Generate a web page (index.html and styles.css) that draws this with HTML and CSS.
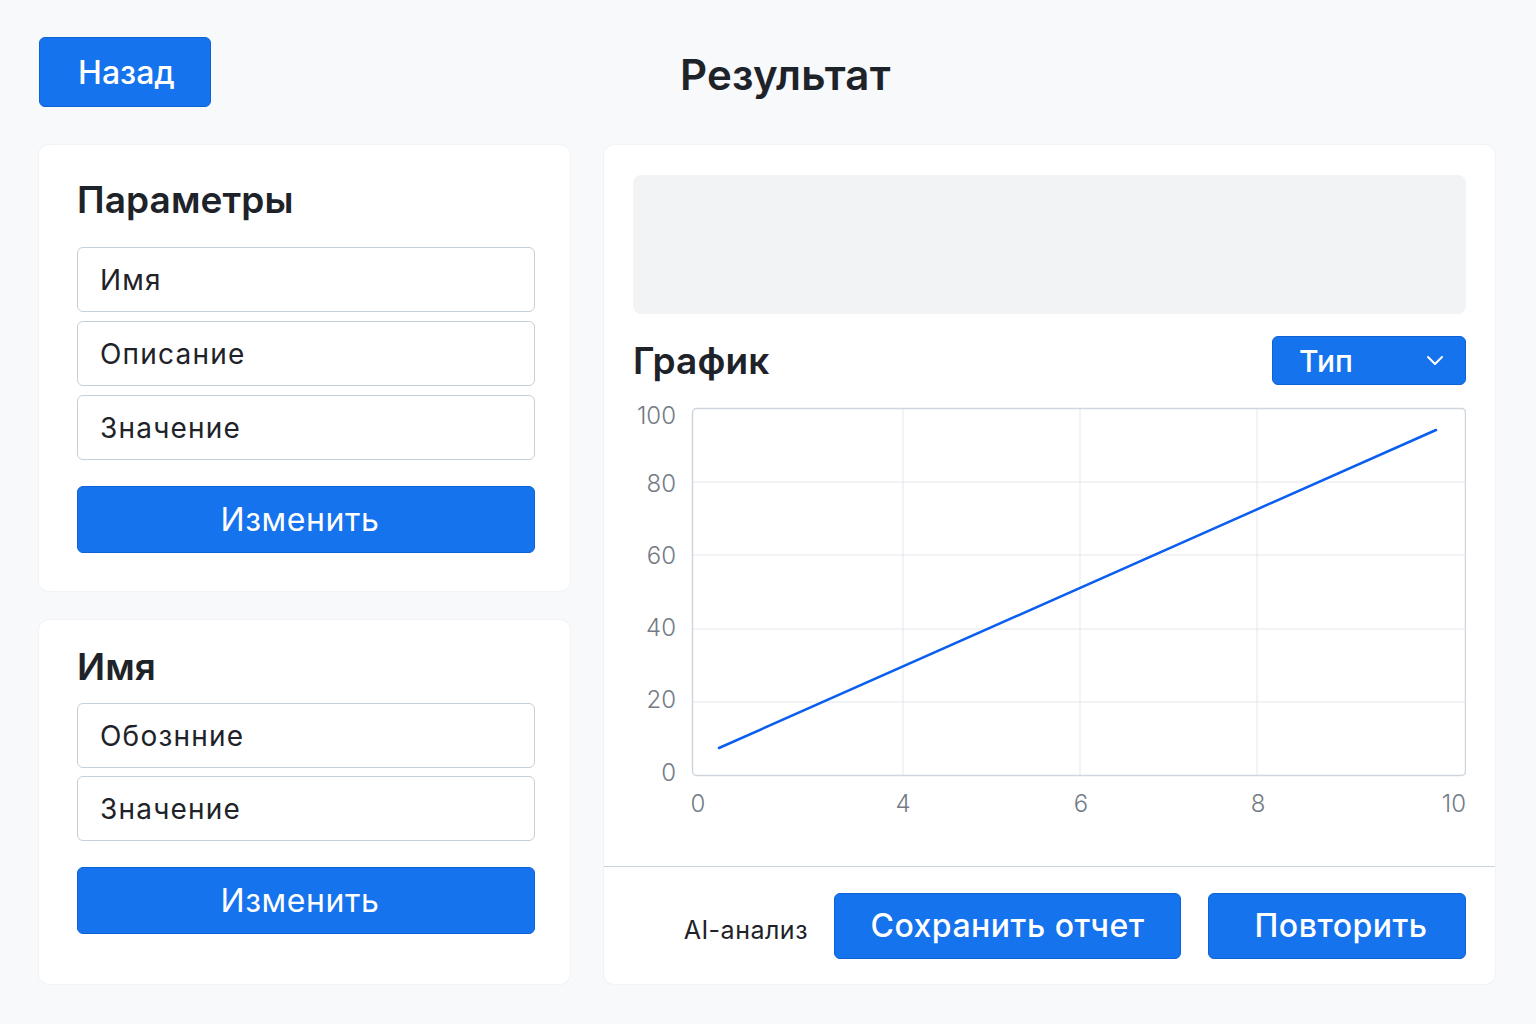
FILE: index.html
```html
<!DOCTYPE html>
<html lang="ru">
<head>
<meta charset="utf-8">
<title>Результат</title>
<link rel="stylesheet" href="styles.css">
</head>
<body>
<div class="page">
  <header class="topbar">
    <button class="btn btn-back">Назад</button>
    <h1 class="page-title">Результат</h1>
  </header>
  <main class="layout">
    <div class="left-col">
      <section class="card card-params">
        <h2 class="card-title">Параметры</h2>
        <div class="fields">
          <div class="field">Имя</div>
          <div class="field">Описание</div>
          <div class="field">Значение</div>
        </div>
        <button class="btn btn-block">Изменить</button>
      </section>
      <section class="card card-name">
        <h2 class="card-title">Имя</h2>
        <div class="fields fields-tight">
          <div class="field">Обознние</div>
          <div class="field">Значение</div>
        </div>
        <button class="btn btn-block">Изменить</button>
      </section>
    </div>
    <section class="card card-result">
      <div class="result-body">
        <div class="placeholder"></div>
        <div class="chart-head">
          <h2 class="card-title">График</h2>
          <button class="btn btn-select">Тип
            <svg class="chev" width="18" height="11" viewBox="0 0 18 11"><path d="M2 2 L9 9 L16 2" fill="none" stroke="#fff" stroke-width="2" stroke-linecap="round" stroke-linejoin="round"/></svg>
          </button>
        </div>
        <svg class="chart" width="833" height="425" viewBox="0 0 833 425">
          <g class="grid">
            <line x1="59" y1="82" x2="833" y2="82"/>
            <line x1="59" y1="155" x2="833" y2="155"/>
            <line x1="59" y1="229" x2="833" y2="229"/>
            <line x1="59" y1="302" x2="833" y2="302"/>
            <line x1="270" y1="8" x2="270" y2="375"/>
            <line x1="447" y1="8" x2="447" y2="375"/>
            <line x1="624" y1="8" x2="624" y2="375"/>
          </g>
          <rect class="plot" x="59.5" y="8.5" width="773" height="367" rx="4"/>
          <g class="ylabels">
            <text x="43" y="23.5">100</text>
            <text x="43" y="92">80</text>
            <text x="43" y="164">60</text>
            <text x="43" y="236">40</text>
            <text x="43" y="308">20</text>
            <text x="43" y="381">0</text>
          </g>
          <g class="xlabels">
            <text x="65" y="412">0</text>
            <text x="270" y="412">4</text>
            <text x="448" y="412">6</text>
            <text x="625" y="412">8</text>
            <text x="821" y="412">10</text>
          </g>
          <line class="series" x1="86" y1="348" x2="803" y2="30"/>
        </svg>
      </div>
      <footer class="result-footer">
        <span class="ai-label">AI-анализ</span>
        <button class="btn btn-save">Сохранить отчет</button>
        <button class="btn btn-repeat">Повторить</button>
      </footer>
    </section>
  </main>
</div>
</body>
</html>
```
FILE: styles.css
```css
* { box-sizing: border-box; }
html, body { margin: 0; padding: 0; }
body {
  background: #f8f9fb;
  font-family: Inter, "Noto Sans", "Liberation Sans", sans-serif;
  color: #1e2329;
}
.page {
  width: 1536px;
  height: 1024px;
  padding: 37px 41px 0 39px;
}
.topbar {
  display: flex;
  align-items: center;
  height: 70px;
}
.btn {
  font-family: inherit;
  background: #1673ee;
  color: #fff;
  border: 1px solid #0d62d6;
  border-radius: 6px;
  cursor: pointer;
  padding: 0;
}
.btn-back {
  width: 172px;
  height: 70px;
  font-size: 32px;
  font-weight: 500;
  padding-left: 3px;
}
.page-title {
  margin: 0 0 0 469px;
  font-size: 42px;
  font-weight: 600;
  line-height: 1;
  padding-top: 6px;
  letter-spacing: 0.2px;
}
.layout {
  display: grid;
  grid-template-columns: 531px 891px;
  column-gap: 34px;
  margin-top: 38px;
  height: 839px;
}
.left-col {
  display: flex;
  flex-direction: column;
  gap: 29px;
}
.card {
  background: #fff;
  border-radius: 10px;
  box-shadow: 0 0 0 1px #f1f3f6;
}
.card-title {
  margin: 0;
  font-size: 37px;
  font-weight: 600;
  line-height: 44px;
  letter-spacing: 0.1px;
}
.card-params { padding: 33px 35px 38px 38px; }
.card-params .card-title { margin-bottom: 25px; }
.card-name { flex: 1; padding: 25px 35px 0 38px; }
.card-name .card-title { margin-bottom: 14px; }
.fields {
  display: flex;
  flex-direction: column;
  gap: 9px;
}
.fields-tight { gap: 8px; }
.field {
  height: 65px;
  border: 1px solid #c6ced8;
  border-radius: 6px;
  padding: 0 22px;
  display: flex;
  align-items: center;
  font-size: 28px;
  letter-spacing: 1.2px;
  color: #1e2329;
}
.btn-block {
  display: block;
  width: 100%;
  height: 67px;
  margin-top: 26px;
  font-size: 32px;
  font-weight: 400;
  letter-spacing: 0.6px;
  padding-right: 12px;
}
.card-result {
  display: flex;
  flex-direction: column;
}
.result-body {
  padding: 30px 29px 0 29px;
  flex: 1;
}
.placeholder {
  height: 139px;
  background: #f2f3f5;
  border-radius: 8px;
}
.chart-head {
  display: flex;
  justify-content: space-between;
  align-items: center;
  margin-top: 22px;
  height: 49px;
}
.btn-select {
  width: 194px;
  height: 49px;
  display: flex;
  align-items: center;
  justify-content: space-between;
  padding: 0 21px 0 26px;
  font-size: 30px;
  font-weight: 500;
}
.chev { display: block; }
.chart {
  display: block;
  margin-top: 15px;
}
.chart .grid line { stroke: #e3e7ec; stroke-width: 1; }
.chart .plot { fill: none; stroke: #cfd6de; stroke-width: 1.5; }
.chart text {
  font-family: Inter, "Noto Sans", sans-serif;
  font-size: 24px;
  font-weight: 300;
  fill: #737b85;
}
.chart .ylabels text { text-anchor: end; }
.chart .xlabels text { text-anchor: middle; }
.chart .series { stroke: #0a5ff0; stroke-width: 2.5; stroke-linecap: round; }
.result-footer {
  border-top: 1.5px solid #c9d3dd;
  height: 118px;
  display: flex;
  align-items: center;
  justify-content: flex-end;
  padding: 0 29px 0 0;
  gap: 27px;
}
.ai-label {
  font-size: 25px;
  font-weight: 400;
  padding-top: 8px;
  margin-right: -1px;
  letter-spacing: 0.5px;
  color: #1e2329;
}
.btn-save, .btn-repeat {
  height: 66px;
  font-size: 32px;
  font-weight: 500;
  letter-spacing: 0.5px;
}
.btn-save { width: 347px; }
.btn-repeat { width: 258px; padding-left: 8px; }
```
